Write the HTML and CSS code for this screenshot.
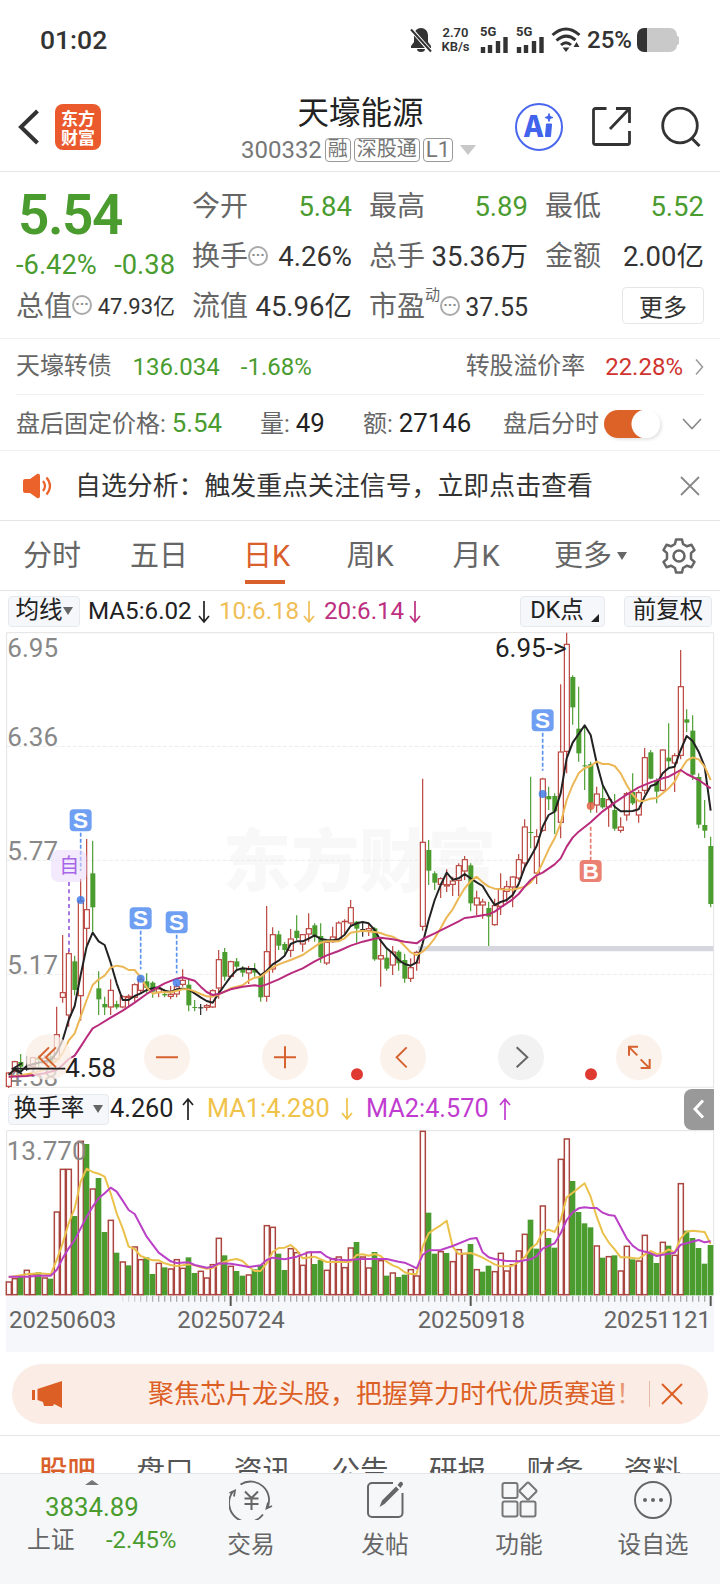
FILE: index.html
```html
<!DOCTYPE html>
<html lang="zh-CN">
<head>
    <meta charset="UTF-8">
    <meta name="viewport" content="width=device-width, initial-scale=1.0">
    <title>天壕能源 300332</title>
    <link rel="stylesheet" href="styles.css">
</head>
<body>
    <div class="status">
        <span class="time">01:02</span>
        <svg class="bell" width="22" height="26" viewBox="0 0 22 26">
            <path d="M11 1a7 7 0 0 1 7 7v7l3 4v2H1v-2l3-4V8a7 7 0 0 1 7-7zM7 22h8a4 3 0 0 1-8 0z" fill="#333"/>
            <path d="M0 1l21 24" stroke="#fff" stroke-width="4"/>
            <path d="M1 2.500l20 22" stroke="#333" stroke-width="2"/>
        </svg>
        <span class="speed">2.70<br>KB/s</span>
        <span class="signal"><b>5G</b>
            <svg width="28" height="17" viewBox="0 0 28 17"><path d="M3 17v-6M10 17V9M18 17V5M25.500 17V1" stroke="#333" stroke-width="4.400"/></svg>
        </span>
        <span class="signal"><b>5G</b>
            <svg width="28" height="17" viewBox="0 0 28 17"><path d="M3 17v-6M10 17V9M18 17V5M25.500 17V1" stroke="#333" stroke-width="4.400"/></svg>
        </span>
        <svg class="wifi" width="30" height="26" viewBox="0 0 30 26">
            <path d="M1.500 8Q15-4 28.500 8M5.500 13.500Q15 5 24.500 13M10 18q5-4.500 10 0" fill="none" stroke="#333" stroke-width="3"/>
            <path d="M11.500 20.500h7L15 25zM22.500 20l3-5 3 5z" fill="#333"/>
        </svg>
        <span class="percent">25%</span>
        <span class="battery"></span>
        <span class="nub"></span>
    </div>

    <div class="header">
        <svg class="back" width="22" height="36" viewBox="0 0 22 36"><path d="M19.500 2L3 18l16.500 16" fill="none" stroke="#333" stroke-width="4"/></svg>
        <span class="logo">东方<br>财富</span>
        <div class="title">
            <h1>天壕能源</h1>
            <div class="code">300332<i>融</i><i>深股通</i><i>L1</i><em></em></div>
        </div>
        <span class="ai">
            <svg width="48" height="48" viewBox="0 0 48 48">
                <circle cx="24" cy="24" r="23" fill="none" stroke="#4a67ee" stroke-width="2"/>
                <text x="9" y="33.500" class="ai-text">A</text>
                <path d="M31.500 21h5l-1 12.500h-5zM34 10.500l1 3 3 1-3 1-1 3-1-3-3-1 3-1z" fill="#4263eb" stroke="#4263eb"/>
            </svg>
        </span>
        <svg class="share" width="39" height="39" viewBox="0 0 39 39"><path d="M14.500 1.500H3.500a2 2 0 0 0-2 2v32a2 2 0 0 0 2 2h32a2 2 0 0 0 2-2V24M18 22L36.500 2.500M24 1.500h13.500V16" fill="none" stroke="#333" stroke-width="2.800"/></svg>
        <svg class="search" width="40" height="40" viewBox="0 0 40 40"><circle cx="19" cy="18.500" r="17.300" fill="none" stroke="#333" stroke-width="2.800"/><path d="M30.500 31l8 8" stroke="#333" stroke-width="3"/></svg>
    </div>

    <div class="quote">
        <div class="main-col">
            <div class="price">5.54</div>
            <div class="change"><span>-6.42%</span><span>-0.38</span></div>
            <div class="cell small"><label>总值</label><i class="more-dot">···</i><b>47.93亿</b></div>
        </div>
        <div class="col">
            <div class="cell down"><label>今开</label><b>5.84</b></div>
            <div class="cell"><label>换手</label><i class="more-dot">···</i><b>4.26%</b></div>
            <div class="cell"><label>流值</label><b>45.96亿</b></div>
        </div>
        <div class="col">
            <div class="cell down"><label>最高</label><b>5.89</b></div>
            <div class="cell"><label>总手</label><b>35.36万</b></div>
            <div class="cell mid"><label>市盈</label><sup>动</sup><i class="more-dot">···</i><b>37.55</b></div>
        </div>
        <div class="col">
            <div class="cell down"><label>最低</label><b>5.52</b></div>
            <div class="cell"><label>金额</label><b>2.00亿</b></div>
            <div class="cell"><button class="more-btn">更多</button></div>
        </div>
    </div>

    <div class="bond">
        <span>天壕转债</span>
        <span class="green">136.034</span>
        <span class="green">-1.68%</span>
        <span class="premium">转股溢价率</span>
        <span class="red">22.28%</span>
        <svg width="9" height="18" viewBox="0 0 9 18"><path d="M1 1.500L7.500 9 1 16.500" fill="none" stroke="#999" stroke-width="1.500"/></svg>
    </div>
    <div class="after">
        <span class="k1">盘后固定价格: <b class="green">5.54</b></span>
        <span class="k2">量: <b>49</b></span>
        <span class="k3">额: <b>27146</b></span>
        <span class="k4">盘后分时</span>
        <span class="toggle"></span>
        <svg width="20" height="12" viewBox="0 0 20 12"><path d="M1 1l9 9.500L19 1" fill="none" stroke="#888" stroke-width="1.600"/></svg>
    </div>
    <div class="notice">
        <svg width="32" height="26" viewBox="0 0 32 26">
            <path d="M1 8q0-2 2-2h5l7-5q3-1 3 2v20q0 3-3 2l-7-5H3q-2 0-2-2z" fill="#ec622b"/>
            <path d="M21 8q4 5 0 10M24.500 4.500q7 8.500 0 17" fill="none" stroke="#ec622b" stroke-width="2.200"/>
        </svg>
        <span>自选分析：触发重点关注信号，立即点击查看</span>
        <svg width="20" height="20" viewBox="0 0 20 20"><path d="M1 1l18 18M19 1L1 19" stroke="#888" stroke-width="1.800"/></svg>
    </div>

    <div class="tabs">
        <span>分时</span>
        <span>五日</span>
        <span class="active">日K</span>
        <span>周K</span>
        <span>月K</span>
        <span class="tab-more">更多<em></em></span>
        <svg width="34" height="36" viewBox="0 0 34 36">
            <path d="M14 1.500h6l1 4.500 4 2.300 4.500-1.500 3 5.200-3.500 3.200v5.600l3.500 3.200-3 5.200-4.500-1.500-4 2.300-1 4.500h-6l-1-4.500-4-2.300-4.500 1.500-3-5.200L5 20.800v-5.600L1.500 12l3-5.200L9 8.300 13 6z" fill="none" stroke="#666" stroke-width="2.500" stroke-linejoin="round"/>
            <circle cx="17" cy="18" r="5.500" fill="none" stroke="#666" stroke-width="2.600"/>
        </svg>
    </div>

    <div class="ma-bar">
        <span class="pill ma-pill">均线<em></em></span>
        <span class="ma5">MA5:6.02</span><svg class="arrow"><use href="#down"/></svg>
        <span class="ma10">10:6.18</span><svg class="arrow a10"><use href="#down"/></svg>
        <span class="ma20">20:6.14</span><svg class="arrow a20"><use href="#down"/></svg>
        <span class="pill dk">DK点<em></em></span>
        <span class="pill fq">前复权</span>
    </div>
    <svg class="defs">
        <symbol id="down" viewBox="0 0 12 24"><path d="M6 1v21M1 16l5 6 5-6" fill="none" stroke="currentColor" stroke-width="1.700"/></symbol>
        <symbol id="up" viewBox="0 0 12 24"><path d="M6 23V2M1 8l5-6 5 6" fill="none" stroke="currentColor" stroke-width="1.700"/></symbol>
    </svg>

    <!-- both charts use 3 units per pixel -->
    <svg class="kline" id="kline" width="720" height="458" viewBox="0 0 2160 1374"></svg>

    <div class="vol-bar">
        <span class="pill vol-pill">换手率<em></em></span>
        <span class="v0">4.260</span><svg class="arrow"><use href="#up"/></svg>
        <span class="v1">MA1:4.280</span><svg class="arrow b1"><use href="#down"/></svg>
        <span class="v2">MA2:4.570</span><svg class="arrow b2"><use href="#up"/></svg>
        <span class="drawer"><svg width="12" height="20" viewBox="0 0 12 20"><path d="M10 1.500L2 10l8 8.500" fill="none" stroke="#fff" stroke-width="3"/></svg></span>
    </div>
    <svg class="volume" id="volume" width="720" height="222" viewBox="0 150 2160 666"></svg>

    <div class="banner">
        <svg width="31" height="27" viewBox="0 0 31 27"><path d="M0 9h3v10H0zM5.500 8L30 0v27l-8-4-1 2h-9l-1-4-5.500-2z" fill="#dc5f26"/></svg>
        <span class="slogan">聚焦芯片龙头股，把握算力时代优质赛道<i>！</i></span>
        <svg class="close" width="22" height="22" viewBox="0 0 22 22"><path d="M1 1l20 20M21 1L1 21" stroke="#dc5f26" stroke-width="2"/></svg>
    </div>

    <div class="sections">
        <span class="on">股吧</span><span>盘口</span><span>资讯</span><span>公告</span><span>研报</span><span>财务</span><span>资料</span>
    </div>

    <div class="bottom">
        <div class="index">
            <em></em>
            <div class="point">3834.89</div>
            <div class="line"><span>上证</span><b>-2.45%</b></div>
        </div>
        <div class="item">
            <svg width="44" height="40" viewBox="0 0 44 40"><path d="M11.500 4.500A18.500 18.500 0 0 1 38 28.500M34 34.500A18.500 18.500 0 0 1 4 11.500M.500 13L6 10.500l-1 6M43 26l-5.500 2.500 1.500-6" fill="none" stroke="#666" stroke-width="1.800"/><path d="M16 11.500l6.500 6.500 6.500-6.500M22.500 18v12M15.500 18.500h14M15.500 24h14" fill="none" stroke="#666" stroke-width="2"/></svg>
            <span>交易</span>
        </div>
        <div class="item">
            <svg width="40" height="40" viewBox="0 0 40 40"><path d="M28 3H7a4 4 0 0 0-4 4v26a4 4 0 0 0 4 4h26.500a4 4 0 0 0 4-4V13" fill="none" stroke="#666" stroke-width="2"/><path d="M14.500 27l2.500-6.500L31 6.500l3 3L19.500 24zM32.500 5L35 2q3-1 3 2.500L35.500 8z" fill="#666"/></svg>
            <span>发帖</span>
        </div>
        <div class="item">
            <svg width="38" height="40" viewBox="0 0 38 40"><g fill="none" stroke="#777" stroke-width="2"><rect x="2.500" y="3" width="15" height="15" rx="2"/><rect x="2.500" y="21.500" width="15" height="15" rx="2"/><rect x="20.500" y="21.500" width="15" height="15" rx="2"/><path d="M27 3q1-1 2 0l7 7q1 1 0 2l-7 7q-1 1-2 0l-7-7q-1-1 0-2z"/></g></svg>
            <span>功能</span>
        </div>
        <div class="item">
            <svg width="40" height="40" viewBox="0 0 40 40"><circle cx="20" cy="20" r="18" fill="none" stroke="#666" stroke-width="1.900"/><g fill="#666"><circle cx="12" cy="20" r="2"/><circle cx="20" cy="20" r="2"/><circle cx="28" cy="20" r="2"/></g></svg>
            <span>设自选</span>
        </div>
    </div>

    <script src="chart.js"></script>
</body>
</html>
```
FILE: styles.css
```css
* {
    box-sizing: border-box;
}
body {
    margin: 0;
    width: 720px;
    height: 1584px;
    overflow: hidden;
    background: #fff;
    color: #333;
    font-family: Roboto, "Noto Sans CJK SC", sans-serif;
    line-height: 1;
    white-space: nowrap;
}
svg {
    flex-shrink: 0;
    display: block;
}
i, em {
    font-style: normal;
}
b {
    font-weight: normal;
}
.green {
    color: #4a9c2f !important;
}
.red {
    color: #d0342f;
}

/* status bar */
.status {
    display: flex;
    align-items: center;
    height: 80px;
    padding-left: 40px;
}
.time {
    width: 370px;
    font-size: 26.5px;
    font-weight: 500;
}
.speed {
    width: 29px;
    margin: 0 10px 0 9px;
    font-size: 13px;
    line-height: 14px;
    font-weight: 600;
    text-align: center;
}
.signal {
    width: 28px;
    margin-right: 8px;
}
.signal b {
    display: block;
    font-size: 13px;
    line-height: 9px;
    font-weight: 700;
}
.signal + .wifi {
    margin: 0 6px 0 -1px;
}
.percent {
    width: 50px;
    font-size: 24px;
    font-weight: 500;
}
.battery {
    width: 40px;
    height: 24px;
    border-radius: 7px;
    background: linear-gradient(90deg, #333 10px, #c9c9c9 10px);
}
.nub {
    width: 2px;
    height: 9px;
    border-radius: 0 2px 2px 0;
    background: #c9c9c9;
}

/* header */
.header {
    display: flex;
    align-items: center;
    height: 92px;
    padding: 2px 19px 0 18px;
    border-bottom: 1px solid #e5e5e5;
}
.logo {
    width: 46px;
    height: 46px;
    margin-left: 15px;
    padding-top: 4px;
    border-radius: 8px;
    background: #ea5a2c;
    color: #fff;
    font: bold 17px/19px "Noto Sans CJK SC", sans-serif;
    text-align: center;
}
.title {
    flex: none;
    width: 414px;
    height: 76px;
    padding: 5px 0 0 105px;
}
.title h1 {
    margin: 0 -30px 2px;
    font-size: 31.5px;
    font-weight: 400;
    line-height: 40px;
    color: #222;
    text-align: center;
}
.code {
    display: flex;
    justify-content: center;
    align-items: center;
    padding-right: 4px;
    font-size: 24px;
    line-height: 28px;
    color: #777;
}
.code i {
    height: 24px;
    margin-left: 3px;
    padding: 0 2px;
    border: 1px solid #999;
    border-radius: 4px;
    font-size: 20px;
    line-height: 21px;
}
.code i:nth-of-type(3) {
    font-size: 22px;
}
.code em {
    margin-left: 7px;
    border: 8px solid transparent;
    border-top: 10px solid #c8c8c8;
    border-bottom: 0;
}
.ai-text {
    font: 900 29px "Noto Sans CJK SC", sans-serif;
    fill: #4263eb;
}
.share {
    margin: 0 30px 0 29px;
}

/* quote numbers */
.quote {
    display: grid;
    grid-template-columns: 159px 160px 159px 158px;
    gap: 16px;
    column-gap: 17px;
    height: 167px;
    padding: 10px 0 0 16px;
    border-bottom: 1px solid #efefef;
}
.price {
    height: 67px;
    padding-left: 2px;
    font-size: 55px;
    font-weight: 600;
    line-height: 66px;
    letter-spacing: -1.500px;
    color: #4a9c2f;
}
.change {
    display: flex;
    justify-content: space-between;
    height: 33px;
    font-size: 27.300px;
    line-height: 33px;
    color: #4a9c2f;
}
.cell {
    display: flex;
    align-items: center;
    height: 50px;
    font-size: 27.500px;
}
.cell label {
    font-size: 28px;
    color: #666;
}
.cell b {
    margin-left: auto;
}
.main-col .cell {
    height: 49px;
}
.cell.down b {
    color: #4a9c2f;
}
.cell.small b {
    font-size: 22px;
}
.cell.mid b {
    font-size: 25px;
}
.more-dot {
    width: 20px;
    height: 20px;
    margin-bottom: 3px;
    border: 2px solid #aaa;
    border-radius: 50%;
    font-size: 15px;
    font-weight: 700;
    line-height: 15px;
    color: #888;
    text-align: center;
}
.cell sup {
    width: 15px;
    margin-bottom: 24px;
    font-size: 15px;
    line-height: 15px;
    color: #666;
}
.more-btn {
    width: 82px;
    height: 37px;
    margin: 0 -1px 3px auto;
    padding: 0;
    border: 1px solid #e6e6e6;
    border-radius: 4px;
    background: #fff;
    color: #333;
    font: 24px "Noto Sans CJK SC", sans-serif;
    line-height: 30px;
}
.quote .col:last-child b {
    margin-right: -1px;
}

/* bond and after-hours rows */
.bond {
    display: flex;
    align-items: center;
    height: 56px;
    margin: 0 16px;
    border-bottom: 1px solid #efefef;
    font-size: 23.900px;
    color: #666;
}
.bond .green {
    margin-left: 21px;
    font-size: 24px;
}
.bond .premium {
    margin-left: auto;
}
.bond .red {
    margin: 0 12px 0 20px;
    font-size: 24px;
}
.after {
    display: flex;
    align-items: center;
    height: 56px;
    padding: 2px 0 0 16px;
    border-bottom: 1px solid #efefef;
    font-size: 24px;
    color: #666;
}
.after b {
    font-size: 25.800px;
    color: #222;
}
.k1 {
    width: 244px;
}
.k2 {
    width: 103px;
}
.k3 {
    width: 140px;
}
.toggle {
    width: 56px;
    height: 28px;
    margin: 0 22px 0 5px;
    border-radius: 14px;
    background: radial-gradient(circle at 42px 14px, #fff 14px, transparent 15px), linear-gradient(90deg, #dc6228 42px, #fff 42px);
    box-shadow: 2px 2px 3px rgba(0, 0, 0, 0.1);
}
.notice {
    display: flex;
    align-items: center;
    height: 70px;
    padding: 0 0 0 22px;
    border-bottom: 1px solid #e5e5e5;
}
.notice span {
    width: 626px;
    padding-left: 21px;
    font-size: 25.900px;
    line-height: 36px;
}

/* period tabs */
.tabs {
    display: grid;
    grid-template-columns: 107px 113px 103.500px 106px 101.500px 106px 40px;
    align-items: center;
    height: 70px;
    padding-left: 23px;
    border-bottom: 1px solid #e5e5e5;
    font-size: 29px;
    color: #666;
}
.tabs span {
    height: 60px;
    line-height: 60px;
}
.tabs svg {
    margin-left: 2px;
}
.tabs .active {
    width: 48px;
    color: #d9602b;
    background: linear-gradient(#d9602b, #d9602b) 2px 54px / 40px 4px no-repeat;
}
.tab-more em, .pill em {
    display: inline-block;
    margin-left: 5px;
    vertical-align: 6px;
    border: 5px solid transparent;
    border-top: 8px solid #666;
    border-bottom: 0;
}

/* indicator bars */
.ma-bar, .vol-bar {
    display: flex;
    align-items: center;
    color: #222;
}
.ma-bar {
    height: 39px;
    padding: 2px 0 0 8px;
    font-size: 24.200px;
}
.pill {
    height: 31px;
    border: 1px solid #e6e9ee;
    border-radius: 4px;
    background: #f6f7fa;
    font-size: 23.500px;
    line-height: 27px;
    text-align: center;
}
.pill em {
    margin-left: 0;
    vertical-align: 3px;
}
.ma-pill {
    width: 72px;
    margin-right: 8px;
}
.ma5 {
    width: 110px;
}
.arrow {
    width: 12px;
    height: 24px;
    margin-right: 9px;
}
.ma10, .a10 {
    color: #efbe57;
}
.ma20, .a20 {
    color: #bd2f80;
}
.ma10 {
    width: 84px;
}
.ma20 {
    width: 85px;
}
.dk {
    width: 85px;
    margin-left: auto;
}
.dk em {
    margin: 0 -4px 0 7px;
    vertical-align: -4px;
    border: 0;
    border-left: 8px solid transparent;
    border-bottom: 8px solid #222;
}
.fq {
    width: 88px;
    margin: 0 8px 0 19px;
}
.defs {
    display: none;
}
.vol-bar {
    height: 42px;
    padding-left: 8px;
    font-size: 25.300px;
}
.vol-pill {
    width: 101px;
    margin-right: 1px;
}
.vol-pill em {
    margin-left: 9px;
}
.v0 {
    width: 72px;
}
.vol-bar .arrow {
    margin-right: 13px;
}
.v1, .b1 {
    color: #efc249;
}
.v1 {
    width: 134px;
}
.v2, .b2 {
    color: #c03cd0;
}
.v2 {
    width: 133px;
}
.drawer {
    display: flex;
    align-items: center;
    justify-content: center;
    width: 30px;
    height: 41px;
    margin: 0 6px 0 auto;
    border-radius: 8px 0 0 8px;
    background: #999;
}
.axis-text {
    font-size: 78px;
    fill: #888;
}
.mark-text {
    font-size: 78px;
    fill: #222;
}
.date-text {
    font-size: 72px;
    fill: #666;
}
.flag-text {
    font: bold 68px "Liberation Sans", sans-serif;
    fill: #fff;
    text-anchor: middle;
}
.self-text {
    font: 60px "Noto Sans CJK SC", sans-serif;
    fill: #a765e8;
    text-anchor: middle;
}
.watermark {
    font: 900 205px "Noto Sans CJK SC", sans-serif;
    fill: #f8f8f8;
}

/* promo banner */
.banner {
    display: flex;
    align-items: center;
    height: 60px;
    margin: 12px 12px 11px;
    padding-left: 20px;
    border-radius: 30px;
    background: #fbede5;
    color: #dc5f26;
}
.slogan {
    flex: none;
    width: 502px;
    margin-left: 85px;
    border-right: 1px solid #e5b9a3;
    font-size: 26px;
}
.slogan i {
    display: inline-block;
    width: 16px;
    opacity: 0.6;
}
.close {
    margin-left: 11px;
}

/* clipped by the bottom bar */
.sections {
    display: flex;
    height: 38px;
    padding: 16px 0 0 39px;
    border-top: 1px solid #e5e5e5;
    overflow: hidden;
    font-size: 28.500px;
    line-height: 40px;
    color: #555;
}
.sections span {
    width: 97.500px;
    flex-shrink: 0;
}
.sections .on {
    color: #d9602b;
    font-weight: 500;
}

.bottom {
    display: flex;
    height: 111px;
    border-top: 1px solid #e4e6ea;
    background: #f6f7f9;
}
.index {
    width: 184px;
    color: #4a9c2f;
}
.index em {
    display: block;
    width: 14px;
    margin: 6px 0 0 85px;
    border: 7px solid transparent;
    border-bottom: 5px solid #777;
    border-top: 0;
}
.point {
    margin-top: 10px;
    padding-left: 45px;
    font-size: 25.800px;
}
.index .line {
    display: flex;
    align-items: center;
    height: 34px;
    margin-top: 3px;
    padding-left: 27px;
    font-size: 23.800px;
}
.line span {
    width: 79px;
    color: #666;
}
.item {
    display: flex;
    flex-direction: column;
    align-items: center;
    width: 134px;
    padding-top: 6px;
    font-size: 23.700px;
    color: #666;
}
.item span {
    margin-top: 14px;
}
```
FILE: chart.js
```js
// candles: [wick top, body top, body bottom, wick bottom, kind]
const candles = [
    [1326,1328,1370,1374,'r'],[1292,1294,1325,1327,'r'],[1272,1296,1310,1324,'g'],[1278,1316,1317,1322,'k'],[1280,1282,1310,1312,'r'],
    [1274,1282,1290,1310,'g'],[1275,1284,1300,1302,'r'],[1270,1280,1300,1310,'g'],[1130,1213,1288,1290,'r'],[915,1087,1103,1118,'r'],
    [960,970,1156,1190,'r'],[977,994,1080,1096,'g'],[746,812,1098,1172,'r'],[627,838,896,945,'r'],[632,730,832,905,'g'],
    [1024,1075,1108,1155,'g'],[1100,1122,1132,1155,'g'],[1048,1080,1132,1155,'r'],[1112,1122,1132,1138,'g'],[1096,1099,1132,1135,'r'],
    [1093,1098,1104,1132,'r'],[1060,1063,1103,1115,'r'],[1040,1048,1082,1092,'r'],[1030,1054,1074,1090,'g'],[1054,1058,1085,1103,'g'],
    [1070,1076,1088,1102,'r'],[1078,1092,1096,1102,'g'],[1068,1092,1100,1108,'r'],[1062,1069,1093,1102,'r'],[1018,1050,1064,1070,'r'],
    [1046,1064,1126,1144,'g'],[1110,1131,1134,1144,'g'],[1122,1132,1133,1155,'k'],[1122,1126,1133,1142,'r'],[1078,1081,1132,1134,'r'],
    [960,988,1075,1106,'r'],[954,966,1040,1052,'g'],[992,994,1040,1042,'r'],[984,994,1010,1018,'g'],[1008,1015,1028,1040,'g'],
    [1008,1018,1030,1062,'r'],[1000,1018,1028,1040,'g'],[1035,1038,1102,1115,'g'],[828,964,1100,1115,'r'],[892,913,1018,1028,'r'],
    [902,913,947,960,'g'],[936,942,960,974,'g'],[897,926,962,982,'r'],[856,902,924,930,'g'],[912,913,943,965,'r'],
    [850,895,913,935,'r'],[880,886,918,935,'g'],[880,918,982,998,'g'],[935,936,1000,1005,'r'],[890,920,936,938,'r'],
    [874,878,932,935,'r'],[868,873,874,910,'r'],[810,832,880,888,'r'],[873,875,896,938,'g'],[878,897,898,920,'k'],
    [880,895,903,918,'r'],[892,895,988,992,'g'],[922,976,988,1070,'r'],[955,983,1016,1022,'g'],[948,965,1006,1035,'r'],
    [960,965,1000,1022,'g'],[972,990,1046,1058,'g'],[985,1012,1046,1056,'r'],[962,966,1000,1022,'r'],[446,636,890,902,'r'],
    [630,660,722,765,'g'],[724,730,758,780,'g'],[742,745,764,804,'r'],[718,763,769,786,'r'],[740,752,764,798,'r'],
    [700,706,752,798,'r'],[678,688,724,750,'r'],[700,706,820,844,'g'],[782,803,826,856,'r'],[806,815,826,866,'r'],
    [815,834,860,948,'g'],[806,826,885,887,'r'],[730,775,830,855,'r'],[752,769,785,815,'r'],[738,740,772,832,'r'],
    [672,688,745,750,'r'],[568,590,700,712,'r'],[440,606,609,655,'g'],[598,619,730,762,'r'],[443,446,602,605,'r'],
    [470,498,508,540,'g'],[490,498,544,612,'g'],[163,365,578,625,'r'],[8,42,365,430,'r'],[136,141,232,284,'g'],
    [170,296,370,395,'g'],[290,406,409,480,'g'],[395,402,520,548,'g'],[470,491,526,548,'r'],[466,504,532,536,'g'],
    [500,508,532,590,'r'],[492,540,596,602,'g'],[562,590,602,608,'r'],[486,490,556,572,'r'],[430,486,520,525,'g'],
    [480,487,556,578,'r'],[354,382,482,492,'r'],[360,367,446,448,'g'],[445,450,485,520,'g'],[358,359,482,484,'r'],
    [280,383,394,415,'g'],[370,376,400,486,'r'],[60,169,377,388,'r'],[238,268,278,306,'g'],[256,302,434,450,'g'],
    [430,441,584,595,'g'],[510,585,602,624,'g'],[620,648,822,832,'g']
];
const ma5 = '26,1335 44,1318 62,1325 80,1308 98,1303 116,1298 134,1294 152,1290 170,1268 188,1230 206,1170 224,1128 242,1035 260,950 278,908 296,934 314,945 332,998 350,1060 368,1110 386,1110 404,1098 422,1090 440,1080 458,1075 476,1072 494,1082 512,1086 530,1078 548,1076 566,1078 584,1090 602,1102 620,1113 638,1118 656,1090 674,1065 692,1040 710,1020 728,1015 746,1017 764,1017 782,1036 800,1022 818,1003 836,992 854,977 872,942 890,934 908,934 926,926 944,916 962,927 980,930 998,931 1016,928 1034,914 1052,888 1070,880 1088,876 1106,880 1124,900 1142,932 1160,955 1178,970 1196,990 1214,1002 1232,1007 1250,997 1268,940 1286,870 1304,810 1322,765 1340,728 1358,749 1376,745 1394,732 1412,745 1430,757 1448,768 1466,798 1484,825 1502,816 1520,810 1538,795 1556,762 1574,712 1592,680 1610,648 1628,590 1646,555 1664,545 1682,490 1700,385 1718,338 1736,312 1754,286 1772,315 1790,398 1808,465 1826,500 1844,530 1862,544 1880,544 1898,543 1916,538 1934,500 1952,468 1970,462 1988,430 2006,414 2024,410 2042,360 2060,318 2078,333 2096,365 2114,410 2132,542';
const ma10 = '26,1340 62,1336 98,1330 134,1318 170,1292 188,1270 206,1232 224,1210 242,1160 260,1110 278,1065 296,1048 314,1037 332,1013 350,1007 368,1010 386,1020 404,1020 422,1042 440,1072 458,1091 476,1087 512,1087 548,1078 566,1078 584,1084 602,1092 620,1099 638,1100 656,1094 692,1075 728,1066 746,1052 764,1043 782,1040 800,1026 818,1012 836,1003 872,990 908,975 944,950 962,938 980,934 1016,934 1034,925 1052,908 1088,902 1124,906 1142,909 1160,916 1178,920 1196,930 1214,948 1232,967 1250,975 1268,965 1286,948 1304,925 1322,895 1340,862 1358,838 1376,805 1394,775 1412,753 1430,740 1448,757 1466,770 1484,776 1502,778 1538,779 1556,775 1574,770 1592,758 1610,735 1628,698 1646,658 1664,625 1682,580 1700,510 1718,465 1736,430 1754,414 1772,408 1790,395 1808,402 1826,402 1844,408 1862,430 1880,465 1898,494 1916,514 1934,512 1952,506 1970,504 1988,490 2006,475 2024,455 2042,420 2060,392 2078,382 2096,388 2114,410 2132,450';
const ma20 = '26,1340 80,1338 134,1330 170,1320 188,1305 206,1287 224,1277 242,1250 260,1222 278,1195 296,1185 332,1163 368,1142 404,1118 440,1092 476,1070 494,1060 530,1046 548,1042 584,1052 602,1070 620,1086 638,1095 656,1092 692,1078 728,1070 764,1066 782,1069 800,1063 836,1048 872,1030 908,1015 944,994 980,976 1016,963 1052,947 1088,935 1124,926 1142,923 1178,928 1214,935 1250,940 1268,927 1304,910 1340,892 1376,874 1394,864 1412,862 1448,856 1466,853 1484,845 1502,832 1520,820 1538,808 1556,792 1574,770 1592,750 1610,736 1628,728 1664,703 1682,685 1700,650 1718,623 1736,605 1772,577 1808,544 1844,518 1880,494 1916,472 1952,457 1988,445 2006,440 2024,430 2042,420 2060,432 2096,450 2132,475';

const volTop = [605,595,590,570,583,577,593,596,395,267,267,408,183,192,326,294,456,420,518,545,556,500,538,532,582,549,562,566,538,564,532,579,573,593,553,474,526,558,573,587,584,568,555,436,441,521,570,505,517,555,516,552,540,570,535,530,562,503,486,530,563,516,541,587,578,591,584,568,587,153,398,521,514,519,544,508,520,492,568,575,557,574,519,572,553,512,462,419,506,377,474,503,237,176,303,396,430,442,497,533,529,526,572,498,538,542,465,520,549,486,497,525,310,452,474,504,551,495];
const volKind = 'rrgrrgrgrrrgrgrggrgrgrrggrgrrrggrrrrgrggrggrrggrrrrggrrrrrgrrgrgrggrrrggrgrrrgrggrrrrrrggrggrrggggrgrgrrgrrggrgrrggggg';
const volMa1 = '26,592 80,583 116,580 152,583 170,540 188,490 206,430 224,385 242,305 260,266 278,276 296,281 314,290 332,340 350,400 368,445 386,500 404,507 422,528 458,541 476,541 494,550 512,555 530,558 548,556 566,553 584,556 602,562 620,566 638,564 656,553 674,545 692,540 710,537 728,543 746,560 764,573 782,573 800,550 818,516 836,504 854,503 872,495 890,510 908,535 944,530 980,546 1034,546 1052,545 1070,525 1088,523 1106,527 1124,522 1142,528 1160,545 1178,556 1196,563 1214,577 1232,582 1250,582 1268,500 1286,460 1304,447 1322,436 1340,422 1358,500 1376,522 1412,519 1430,525 1448,533 1466,543 1484,553 1502,559 1520,559 1538,557 1556,546 1574,532 1592,505 1610,492 1628,456 1646,449 1664,456 1682,420 1700,352 1718,338 1736,324 1754,310 1772,350 1790,410 1808,458 1826,487 1844,508 1862,532 1880,532 1916,536 1934,524 1952,513 1970,522 1988,520 2006,508 2024,518 2042,475 2060,455 2078,452 2114,456 2132,492';
const volMa2 = '26,590 80,590 116,587 152,587 170,570 188,535 206,505 224,480 242,445 260,410 278,380 296,355 314,340 332,323 350,335 368,362 386,390 404,402 440,470 476,518 512,544 530,549 566,547 584,555 620,563 638,560 656,550 692,551 728,557 746,561 782,556 800,540 818,533 854,538 890,530 926,517 962,516 980,530 998,538 1040,541 1080,537 1124,537 1160,537 1196,545 1214,548 1232,556 1250,565 1268,525 1286,511 1322,510 1358,498 1412,476 1430,474 1448,517 1466,532 1484,537 1520,543 1556,544 1592,538 1610,528 1628,506 1664,490 1682,460 1700,420 1718,397 1736,385 1754,382 1772,384 1790,384 1808,398 1826,405 1844,407 1880,475 1898,497 1916,510 1952,520 1970,528 1988,524 2024,518 2042,494 2060,490 2096,480 2114,487 2132,484';

const RED = '#b9403a', GREEN = '#4a9c2f', BLACK = '#222';
const cx = i => 26 + i * 18;
const poly = (pts, color, w) => `<polyline points="${pts}" fill="none" stroke="${color}" stroke-width="${w}" stroke-linejoin="round"/>`;

function drawKline() {
    let s = '<text x="668" y="768" class="watermark">东方财富</text>';
    [349, 691, 1033].forEach(y => {
        s += `<path d="M20 ${y}H2138" stroke="#ebebeb" stroke-width="3" stroke-dasharray="12 6"/>`;
    });
    s += '<path d="M20 1374V8H2141V1374" fill="none" stroke="#e3e3e3" stroke-width="3"/><path d="M20 1372H2141" stroke="#ececec" stroke-width="4"/>';
    s += '<path d="M1254 956H2140" stroke="#d6d7de" stroke-width="16"/>';
    [['6.95', 82], ['6.36', 349], ['5.77', 691], ['5.17', 1033], ['4.58', 1369]].forEach(t => {
        s += `<text x="22" y="${t[1]}" class="axis-text">${t[0]}</text>`;
    });
    candles.forEach(([wt, bt, bb, wb, k], i) => {
        const x = cx(i);
        if (k === 'r') {
            s += `<path d="M${x} ${wt}V${bt}M${x} ${bb}V${wb}" stroke="${RED}" stroke-width="3.500"/>`;
            s += `<rect x="${x - 7}" y="${bt + 1}" width="15" height="${Math.max(bb - bt - 2, 1)}" fill="#fff" stroke="${RED}" stroke-width="3.500"/>`;
        } else {
            const c = k === 'g' ? GREEN : BLACK;
            s += `<path d="M${x} ${wt}V${wb}" stroke="${c}" stroke-width="3.500"/>`;
            s += `<rect x="${x - 7}" y="${bt}" width="15" height="${Math.max(bb - bt, 3)}" fill="${c}"/>`;
        }
    });
    s += poly(ma5, BLACK, 6) + poly(ma10, '#ecb755', 6) + poly(ma20, '#b92b7c', 6);

    // trade markers: x, flag top, dashed line from/to, dot y
    [[242, 538, 608, 722, 810], [422, 832, 902, 1018, 1046], [530, 844, 914, 1030, 1058], [1628, 238, 308, 422, 492]].forEach(m => {
        s += `<path d="M${m[0]} ${m[2]}V${m[3]}" stroke="#5b92ee" stroke-width="5" stroke-dasharray="12 6"/>`;
        s += `<circle cx="${m[0]}" cy="${m[4]}" r="12" fill="#3b78e7" opacity=".8"/>`;
        s += `<rect x="${m[0] - 33}" y="${m[1]}" width="66" height="66" rx="12" fill="#6f9ff2"/>`;
        s += `<text x="${m[0]}" y="${m[1] + 57}" class="flag-text">S</text>`;
    });
    s += '<path d="M1772 590V690" stroke="#e8796b" stroke-width="5" stroke-dasharray="12 6"/><circle cx="1772" cy="528" r="12" fill="#e4593f" opacity=".8"/>';
    s += '<rect x="1739" y="690" width="66" height="66" rx="12" fill="#ea8173"/><text x="1772" y="747" class="flag-text">B</text>';
    s += '<rect x="153" y="660" width="107" height="96" rx="22" fill="#e9d9fb" opacity=".55"/><text x="208" y="730" class="self-text">自</text>';
    s += '<path d="M207 756V970" stroke="#9a5fdb" stroke-width="5" stroke-dasharray="12 10"/>';

    // round control buttons
    [145, 501, 855, 1209, 1563, 1917].forEach((x, i) => {
        s += `<circle cx="${x}" cy="1282" r="69" fill="${i === 4 ? '#ededed' : '#fbede5'}" opacity=".75"/>`;
    });
    s += '<g fill="none" stroke="#d5622f" stroke-width="6"><path d="M147 1252l-30 30 30 30M168 1252l-30 30 30 30M468 1282h66M822 1282h66M855 1249v66M1220 1252l-30 30 30 30"/>';
    s += '<path d="M1914 1250h-27v27M1888 1252l24 24M1922 1314h27v-27M1946 1312l-24-24"/></g>';
    s += '<path d="M1550 1252l32 30-32 30" fill="none" stroke="#666" stroke-width="6"/>';
    s += '<circle cx="1071" cy="1333" r="18" fill="#df3a31"/><circle cx="1773" cy="1333" r="18" fill="#df3a31"/>';

    s += '<path d="M66 1300l-28 16 28 16M40 1316H196" fill="none" stroke="#222" stroke-width="5"/><text x="196" y="1340" class="mark-text">4.58</text>';
    s += '<text x="1485" y="80" class="mark-text">6.95-&gt;</text>';
    document.getElementById('kline').innerHTML = s;
}

function drawVolume() {
    let s = '<rect x="18" y="646" width="2124" height="170" fill="#f6f7fa"/>';
    s += '<path d="M20 646V152H2141V646" fill="none" stroke="#e3e3e3" stroke-width="3"/>';
    volTop.forEach((y, i) => {
        const x = cx(i);
        if (volKind[i] === 'r') {
            s += `<rect x="${x - 7}" y="${y + 1}" width="15" height="${643 - y}" fill="#fff" stroke="#aa453f" stroke-width="4.500"/>`;
        } else {
            s += `<rect x="${x - 9}" y="${y}" width="17" height="${646 - y}" fill="${GREEN}"/>`;
        }
    });
    s += '<text x="20" y="239" class="axis-text">13.770</text>';
    s += poly(volMa1, '#eac14b', 6) + poly(volMa2, '#ba40c6', 6);
    for (let i = 19; i < 118; i++) {
        const major = i === 37 || i === 77 || i === 117;
        s += `<path d="M${cx(i)} 648V${major ? 678 : 665}" stroke="${major ? '#555' : '#aaa'}" stroke-width="${major ? 6 : 4}" opacity="${Math.min(1, (i - 17) / 8)}"/>`;
    }
    [['20250603', 27], ['20250724', 532], ['20250918', 1253], ['20251121', 1811]].forEach(d => {
        s += `<text x="${d[1]}" y="745" class="date-text" textLength="322">${d[0]}</text>`;
    });
    document.getElementById('volume').innerHTML = s;
}

drawKline();
drawVolume();
```
